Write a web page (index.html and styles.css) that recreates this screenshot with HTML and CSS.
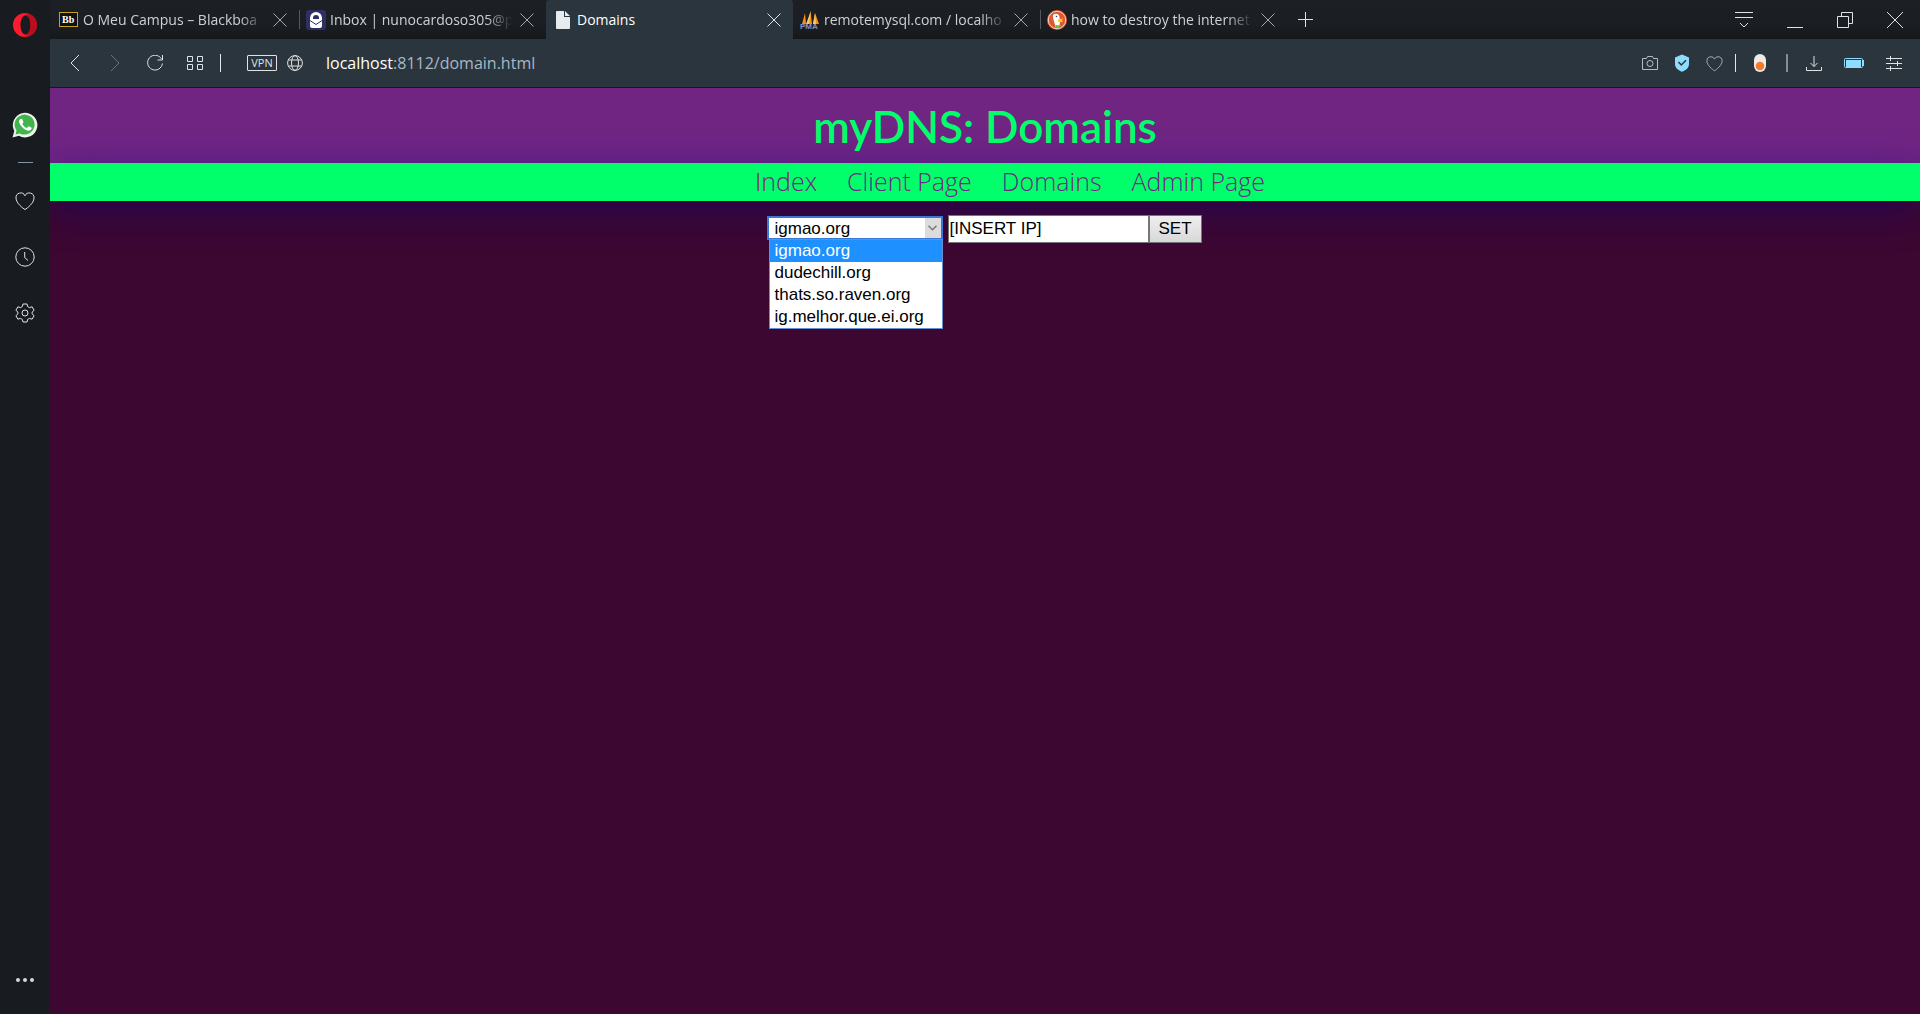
FILE: index.html
```html
<!DOCTYPE html>
<html lang="en">
<head>
<meta charset="utf-8">
<title>Domains</title>
<link rel="stylesheet" href="styles.css">
</head>
<body>
<svg class="defs" aria-hidden="true">
  <symbol id="i-close" viewBox="0 0 14 14"><path d="M.5.5l13 13M13.5.5l-13 13"/></symbol>
  <symbol id="i-heart" viewBox="0 0 20 20"><path d="M10 18.500C8 17.500 1 12 1 7A4.700 4.700 0 0 1 10 4.800 4.700 4.700 0 0 1 19 7C19 12 12 17.500 10 18.500z"/></symbol>
</svg>
<div class="browser">
  <aside class="sidebar">
    <button class="side-btn side-opera" aria-label="Opera menu">
      <svg width="26" height="26" viewBox="0 0 26 26"><defs><linearGradient id="op" x1="0" x2="1"><stop offset=".4" stop-color="#ff1b2d"/><stop offset="1" stop-color="#a70014"/></linearGradient></defs><path fill="url(#op)" fill-rule="evenodd" d="M13 1a12 12 0 1 0 0 24a12 12 0 1 0 0-24zM13.500 3.500c3 0 5 4.200 5 9.500s-2 9.500-5 9.500-5-4.200-5-9.500 2-9.500 5-9.500z"/><path fill="#b80e20" d="M13.500 3.500c2-1.500 5-1.500 7.500.5a12 12 0 0 1 0 18c-2.500 2-5.500 2-7.500.5 3 0 5-4.200 5-9.500s-2-9.500-5-9.500z"/></svg>
    </button>
    <button class="side-btn side-chat" aria-label="WhatsApp">
      <svg width="26" height="26" viewBox="0 0 26 26"><path fill="#eef3ee" d="M.5 25.500L2.300 19A12.300 12.300 0 1 1 7 23.800z"/><path fill="#3fb54c" d="M3.500 22.500l1-4A10 10 0 1 1 7.800 21.400z"/><path fill="#fff" d="M9.200 6.800c-.8-.2-2 .9-2.200 2.300-.2 1.800 1.400 4.500 4 6.800 2.600 2.200 5 3.100 6.700 2.600 1.200-.4 2-1.500 1.900-2.500 0-.5-2.500-1.800-3-1.700-.5.100-1.100 1.600-1.600 1.600-1.300-.2-4.300-2.800-4.600-4 0-.5 1-1 1-1.600 0-.5-1-3-1.400-3.300z"/></svg>
    </button>
    <span class="side-rule"></span>
    <button class="side-btn" aria-label="My Flow"><svg class="line" width="20" height="20"><use href="#i-heart"/></svg></button>
    <button class="side-btn" aria-label="History"><svg class="line" width="20" height="20" viewBox="0 0 20 20"><circle cx="10" cy="10" r="9.200"/><path d="M9.700 5v5.500l3.300 3"/></svg></button>
    <button class="side-btn" aria-label="Settings"><svg class="line" width="20" height="20" viewBox="0 0 20 20"><circle cx="10" cy="10" r="3"/><path d="M8 1h4l.7 2.600 1.800 1 2.600-.8 2 3.500-2 1.800v1.800l2 1.800-2 3.500-2.600-.8-1.800 1L12 19H8l-.7-2.600-1.800-1-2.600.8-2-3.500 2-1.800V9.100l-2-1.800 2-3.500 2.600.8 1.800-1z"/></svg></button>
    <button class="side-btn side-more" aria-label="More"><svg width="20" height="6" viewBox="0 0 20 6" fill="#d3d8dc"><circle cx="3" cy="3" r="2"/><circle cx="10" cy="3" r="2"/><circle cx="17" cy="3" r="2"/></svg></button>
  </aside>

  <div class="window">
    <div class="tabbar">
      <div class="tab">
        <span class="favicon"><svg width="19" height="15" viewBox="0 0 19 15"><rect x=".5" y=".5" width="18" height="14" fill="#111" stroke="#c8a21d"/><text class="bb" x="3" y="11">Bb</text></svg></span>
        <span class="tab-title fade">O Meu Campus – Blackboa</span>
        <button class="tab-close" aria-label="Close tab"><svg class="line" width="14" height="14"><use href="#i-close"/></svg></button>
      </div>
      <div class="tab split">
        <span class="favicon"><svg width="20" height="20" viewBox="0 0 20 20"><rect width="20" height="20" rx="3" fill="#2e2f63"/><path fill="#fff" d="M4 8a6 6 0 0 1 12 0v8a2 2 0 0 1-2 2H6a2 2 0 0 1-2-2z"/><path fill="#2e2f63" d="M7 9V8a3 3 0 0 1 6 0v1z"/><path fill="none" stroke="#2e2f63" d="M4 10.500l6 4 6-4"/></svg></span>
        <span class="tab-title fade">Inbox | nunocardoso305@p</span>
        <button class="tab-close" aria-label="Close tab"><svg class="line" width="14" height="14"><use href="#i-close"/></svg></button>
      </div>
      <div class="tab active">
        <span class="favicon"><svg width="14" height="18" viewBox="0 0 14 18"><path fill="#e8ebed" d="M0 1q0-1 1-1h7v6h6v11q0 1-1 1H1q-1 0-1-1zM9 0l5 5H9z"/></svg></span>
        <span class="tab-title">Domains</span>
        <button class="tab-close" aria-label="Close tab"><svg class="line" width="14" height="14"><use href="#i-close"/></svg></button>
      </div>
      <div class="tab">
        <span class="favicon"><svg width="20" height="20" viewBox="0 0 20 20"><path fill="#f29111" d="M2 14L5 3l1 11zM7 14l3.500-13L12 14zM13 14l2-11 4 11z"/><path fill="#ffc46b" d="M6 14l5-13-2 13zM13 14l2-11 1 11z"/><text class="pma" x="0" y="19">PMA</text></svg></span>
        <span class="tab-title fade">remotemysql.com / localho</span>
        <button class="tab-close" aria-label="Close tab"><svg class="line" width="14" height="14"><use href="#i-close"/></svg></button>
      </div>
      <div class="tab split">
        <span class="favicon"><svg width="20" height="20" viewBox="0 0 20 20"><circle cx="10" cy="10" r="10" fill="#de5833"/><circle cx="10" cy="10" r="8.700" fill="none" stroke="#f6d4c8" stroke-width="1"/><path fill="#fff" d="M6 5c2-2 6-1.500 6.500 2l.5 5-1 6-3 .3C8 14 5.500 8 6 5z"/><path fill="#fdd20a" d="M11 9.500l5-1-1 2 1 1.300-5 .5z"/><path fill="#65bc46" d="M8.500 15l5 .5v2.500l-5 .3z"/><circle cx="9.500" cy="6.500" r=".8" fill="#2d4f8e"/></svg></span>
        <span class="tab-title fade">how to destroy the internet</span>
        <button class="tab-close" aria-label="Close tab"><svg class="line" width="14" height="14"><use href="#i-close"/></svg></button>
      </div>
      <button class="new-tab" aria-label="New tab"><svg class="line" width="15" height="15" viewBox="0 0 15 15"><path d="M7.500 0v15M0 7.500h15"/></svg></button>
      <div class="window-controls">
        <button aria-label="Tab menu"><svg class="line" width="18" height="16" viewBox="0 0 18 16"><path d="M0 .5h18M0 5.500h18M5 11l4 4 4-4"/></svg></button>
        <button aria-label="Minimize"><svg class="line" width="16" height="16" viewBox="0 0 16 16"><path d="M0 15.500h16"/></svg></button>
        <button aria-label="Restore"><svg class="line" width="16" height="16" viewBox="0 0 16 16"><path d="M.5 4.500h11v11H.500zM4.500 4V.500h11v11H12"/></svg></button>
        <button aria-label="Close"><svg class="line" width="16" height="16" viewBox="0 0 16 16"><path d="M0 0l16 16M16 0L0 16"/></svg></button>
      </div>
    </div>

    <div class="toolbar">
      <div class="nav-icons">
        <button aria-label="Back"><svg class="line" width="16" height="16" viewBox="0 0 16 16"><path d="M12 0L4 8l8 8"/></svg></button>
        <button aria-label="Forward" class="dim"><svg class="line" width="16" height="16" viewBox="0 0 16 16"><path d="M4 0l8 8-8 8"/></svg></button>
        <button aria-label="Reload"><svg class="line" width="16" height="16" viewBox="0 0 16 16"><path d="M14.500 4A7.400 7.400 0 1 0 15.400 8.500M15.500 0v5h-5"/></svg></button>
        <button aria-label="Speed dial"><svg class="line" width="16" height="14" viewBox="0 0 16 14"><path d="M.5.5h5v5h-5zM10.500.5h5v5h-5zM.5 8.500h5v5h-5zM10.500 8.500h5v5h-5z"/></svg></button>
      </div>
      <span class="bar"></span>
      <button class="vpn">VPN</button>
      <button class="globe" aria-label="Site information"><svg class="line" width="16" height="16" viewBox="0 0 16 16"><circle cx="8" cy="8" r="7.400"/><ellipse cx="8" cy="8" rx="3.500" ry="7.400"/><path d="M1.500 5h13M1.500 11h13"/></svg></button>
      <div class="address"><span class="host">localhost</span>:8112/domain.html</div>
      <div class="tools">
        <button aria-label="Snapshot"><svg class="line muted" width="16" height="14" viewBox="0 0 16 14"><path d="M.5 2.500h4L5.500.5h5l1 2h4v11H.500z"/><circle cx="8" cy="7.500" r="3"/></svg></button>
        <button aria-label="Ad blocker"><svg width="16" height="18" viewBox="0 0 16 18"><path fill="#8fdcff" d="M8 .5l7 3V10c0 4-3.500 6.500-7 7.800C4.500 16.500 1 14 1 10V3.500z"/><path fill="none" stroke="#2b353d" stroke-width="1.500" d="M4.500 8l2.800 3 4.700-4.700"/></svg></button>
        <button aria-label="Bookmark"><svg class="line muted" width="17" height="17" viewBox="0 0 20 20"><use href="#i-heart" width="20" height="20"/></svg></button>
      </div>
      <span class="bar"></span>
      <button class="ext" aria-label="Extension"><svg width="12" height="18" viewBox="0 0 12 18"><rect width="12" height="18" rx="6" fill="#ecebea"/><circle cx="6" cy="12" r="4.300" fill="#f47a2c"/></svg></button>
      <span class="bar thick"></span>
      <div class="tools wide">
        <button aria-label="Downloads"><svg class="line" width="16" height="15" viewBox="0 0 16 15"><path d="M8 0v10.500M4.500 7L8 10.500 11.500 7M.5 11v3.500h15V11"/></svg></button>
        <button aria-label="Battery saver"><svg width="20" height="10" viewBox="0 0 20 10"><rect x=".5" y=".5" width="18" height="9" rx="1" fill="none" stroke="#8fdcff"/><rect x="2" y="2" width="15" height="8" fill="#8fdcff"/><path fill="#8fdcff" d="M19 2h1v6h-1z"/></svg></button>
        <button aria-label="Easy setup"><svg class="line" width="16" height="15" viewBox="0 0 16 15"><path d="M0 2.500h16M0 7.500h16M0 12.500h16M4.500 0v5M11.500 5v5M4.500 10v5"/></svg></button>
      </div>
    </div>

    <main class="page">
      <header class="page-header"><h1>myDNS: Domains</h1></header>
      <nav class="page-nav">
        <a href="#index">Index</a>
        <a href="#client">Client Page</a>
        <a href="#domains">Domains</a>
        <a href="#admin">Admin Page</a>
      </nav>
      <form class="domain-form">
        <div class="select-box">
          <select aria-label="Domain">
            <option>igmao.org</option>
            <option>dudechill.org</option>
            <option>thats.so.raven.org</option>
            <option>ig.melhor.que.ei.org</option>
          </select>
          <span class="arrow"><svg width="9" height="6" viewBox="0 0 9 6"><path fill="none" stroke="#777" stroke-width="1.500" d="M.5.800l4 4 4-4"/></svg></span>
          <ul class="options">
            <li class="selected">igmao.org</li>
            <li>dudechill.org</li>
            <li>thats.so.raven.org</li>
            <li>ig.melhor.que.ei.org</li>
          </ul>
        </div>
        <input type="text" class="ip" aria-label="IP address" value="[INSERT IP]">
        <button type="button" class="set">SET</button>
      </form>
    </main>
  </div>
</div>
</body>
</html>
```
FILE: styles.css
```css
* { box-sizing: border-box; }

body {
  margin: 0;
  background: #181c20;
  font-family: "Open Sans", "Noto Sans", sans-serif;
}

button {
  margin: 0;
  padding: 0;
  border: 0;
  background: none;
  font: inherit;
  color: inherit;
}

svg { display: block; }
.defs { display: none; }
.line { fill: none; stroke: #dfe3e6; }
.muted { stroke: #b4bdc4; }

.browser {
  display: grid;
  grid-template-columns: 50px minmax(0, 1fr);
  min-height: 100vh;
}

/* Sidebar */
.sidebar {
  display: flex;
  flex-direction: column;
  align-items: center;
  gap: 36px;
  padding: 12px 0 31px;
  background: #181c20;
}
.side-chat { margin-top: 38px; }
.side-rule {
  width: 15px;
  height: 1px;
  margin: -12px 0 -8px;
  background: #8494a0;
}
.side-more { margin-top: auto; }

/* Tabs */
.window {
  display: flex;
  flex-direction: column;
}
.tabbar {
  display: flex;
  align-items: center;
  height: 39px;
  padding-left: 2px;
  background: linear-gradient(#1c2024, #1b1f23 60%, #15181b);
}
.tab {
  display: flex;
  align-items: center;
  flex: 0 1 247px;
  min-width: 0;
  height: 39px;
  padding: 0 12px 0 6px;
  color: #ced1d3;
  font-size: 14px;
}
.tab.active {
  background: #2b353d;
  color: #fff;
  border-radius: 3px 3px 0 0;
}
.tab.split {
  background: linear-gradient(#54585c, #54585c) left center / 1px 19px no-repeat;
}
.favicon {
  display: flex;
  justify-content: center;
  flex: none;
  width: 21px;
  margin-right: 4px;
}
.bb { font: bold 10px "Liberation Serif", serif; fill: #fff; }
.pma { font: bold 8px "Liberation Sans", sans-serif; fill: #8d8fbd; }
.tab-title {
  flex: 1;
  overflow: hidden;
  white-space: nowrap;
  line-height: 24px;
}
.fade { mask-image: linear-gradient(90deg, #000 86%, transparent); }
.tab-close { margin-left: 8px; }
.tab:not(.active) .line { stroke: #a5a9ac; }
.new-tab { margin-left: 11px; }
.window-controls {
  display: flex;
  gap: 34px;
  margin-left: auto;
  padding-right: 17px;
}

/* Address bar */
.toolbar {
  display: flex;
  align-items: center;
  height: 49px;
  padding: 0 18px 0 17px;
  background: #2b353d;
  border-bottom: 1px solid #14181a;
}
.nav-icons { display: flex; align-items: center; gap: 24px; }
.dim { opacity: .35; }
.bar {
  width: 1px;
  height: 18px;
  margin-left: 17px;
  background: #e4e7e9;
}
.bar.thick { width: 2px; margin-left: 20px; background: #8b8b8b; }
.vpn {
  width: 30px;
  height: 16px;
  margin-left: 26px;
  border: 1px solid #dfe3e6;
  border-radius: 1px;
  color: #dfe3e6;
  font-size: 11px;
  line-height: 14px;
}
.globe { margin-left: 10px; }
.address {
  flex: 1;
  margin-left: 23px;
  color: #a9b8c3;
  font-size: 16px;
  line-height: 24px;
}
.host { color: #fff; }
.tools { display: flex; align-items: center; gap: 16px; }
.tools + .bar { margin-left: 12px; }
.ext { margin-left: 18px; }
.wide { gap: 22px; margin-left: 18px; }

/* Web page */
.page {
  flex: 1;
  overflow: clip;
  background: #3c0731;
}
.page-header {
  display: flex;
  justify-content: center;
  align-items: center;
  height: 75px;
  background: #702583;
}
h1 {
  margin: 0;
  color: #00ff6a;
  font-family: Lato, "Open Sans", sans-serif;
  font-size: 44px;
  font-weight: 600;
  line-height: 64px;
}
.page-nav {
  display: flex;
  justify-content: center;
  gap: 30px;
  height: 38px;
  padding-left: 50px;
  background: #00ff6a;
  box-shadow: 0 8px 40px rgba(0, 0, 130, .42);
}
.page-nav a {
  color: #702583;
  font-size: 25px;
  font-weight: 300;
  line-height: 36px;
  text-decoration: none;
}
.domain-form {
  display: flex;
  justify-content: center;
  align-items: flex-start;
  padding: 14px 2px 0 0;
  font-family: "Liberation Sans", Arial, sans-serif;
  font-size: 17px;
}
.select-box {
  position: relative;
  width: 176px;
  margin: 1px 5px 0 0;
}
select {
  display: block;
  appearance: none;
  width: 100%;
  height: 24px;
  padding: 0 24px 0 6px;
  border: 2px solid #3a78d8;
  border-radius: 0;
  outline: 0;
  background: #fff;
  color: #000;
  font: inherit;
}
.arrow {
  position: absolute;
  top: 2px;
  right: 2px;
  display: grid;
  place-items: center;
  width: 16px;
  height: 20px;
  background: #dcdcdc;
  pointer-events: none;
}
.options {
  position: absolute;
  top: 23px;
  left: 2px;
  right: 0;
  margin: 0;
  padding: 0;
  border: 1px solid #6a8fd0;
  background: #fff;
  color: #000;
  list-style: none;
}
.options li { padding-left: 5px; line-height: 22px; }
.options .selected { background: #1e90ff; color: #fff; }
.ip {
  width: 201px;
  height: 28px;
  padding: 0 1px;
  border: 1px solid #767676;
  border-radius: 0;
  color: #000;
  font: inherit;
}
.set {
  width: 53px;
  height: 28px;
  border: 1px solid #767676;
  background: linear-gradient(#efefef, #d8d8d8);
  color: #000;
}
```
